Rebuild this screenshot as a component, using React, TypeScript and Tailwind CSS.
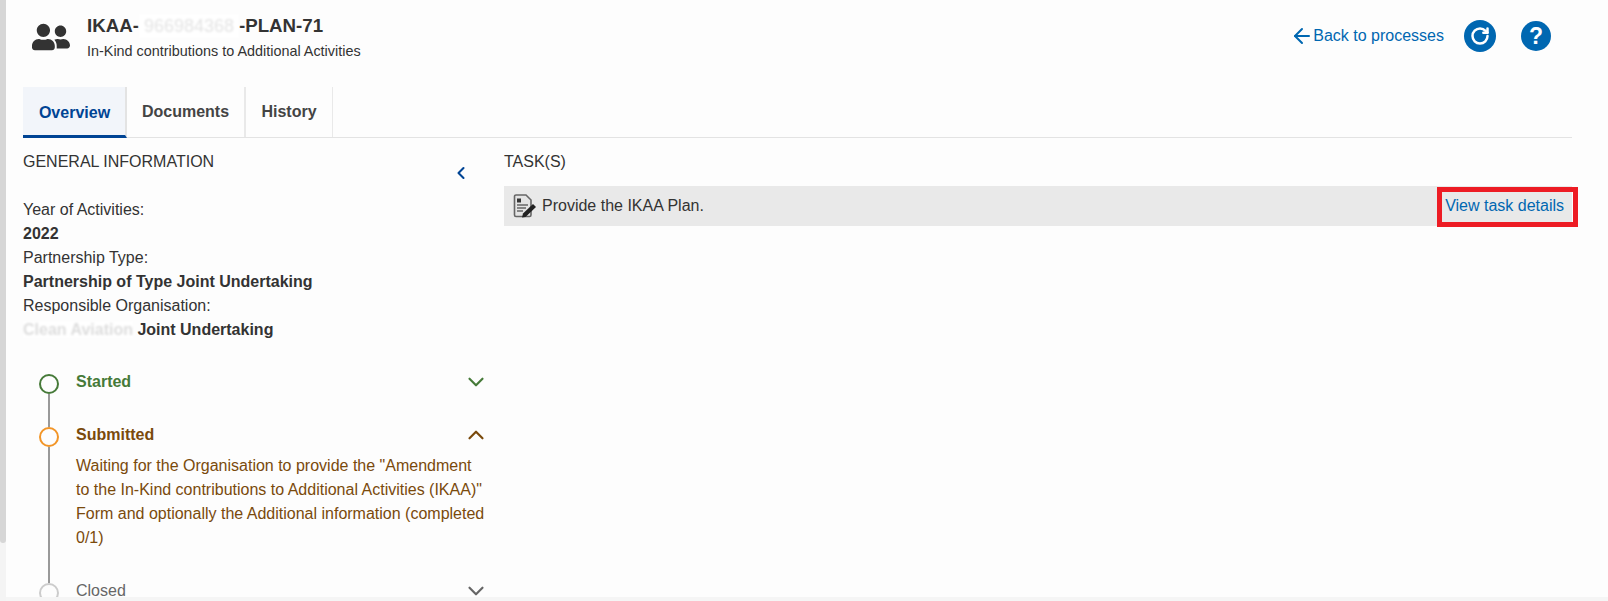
import React from 'react';
import { FaUserFriends } from 'react-icons/fa';
import { ArrowLeft, ChevronDown, ChevronLeft, ChevronUp, RotateCw } from 'lucide-react';

const TaskIcon = () => (
  <svg width="24" height="24" viewBox="0 0 24 24" fill="none">
    <path d="M1.500 2.500a1.500 1.500 0 0 1 1.500-1.500h10l5 5v15a1.500 1.500 0 0 1-1.500 1.500H3a1.500 1.500 0 0 1-1.500-1.500z" fill="#e4e4e4" stroke="#666" strokeWidth="1.600" />
    <rect x="4" y="4.500" width="4" height="4" fill="#333" />
    <path d="M4 11h11M4 14h9M4 17h6" stroke="#666" strokeWidth="1.300" />
    <path d="M9 23.500l1-4L20 10l3 3L12.500 23z" fill="#222" />
  </svg>
);

type StepProps = {
  label: string;
  labelClass: string;
  ringClass: string;
  open?: boolean;
  hasLine?: boolean;
  children?: React.ReactNode;
};

const Step = ({ label, labelClass, ringClass, open, hasLine = true, children }: StepProps) => (
  <div className="flex">
    <div className="w-[53px] pl-[16px] flex flex-col shrink-0">
      <div className={`w-[20px] h-[20px] rounded-full border-2 shrink-0 ${ringClass}`} />
      {hasLine && <div className="w-[2px] flex-1 bg-[#999999] ml-[9px]" />}
    </div>
    <div className="flex-1 min-w-0">
      <div className="flex items-center justify-between h-[20px] mt-[-2px]">
        <span className={`text-[16px] ${labelClass}`}>{label}</span>
        {open ? (
          <ChevronUp className={`w-[26px] h-[26px] mr-[-5px] ${labelClass}`} strokeWidth={2} />
        ) : (
          <ChevronDown className={`w-[26px] h-[26px] mr-[-5px] ${labelClass}`} strokeWidth={2} />
        )}
      </div>
      {children}
    </div>
  </div>
);

export default function App() {
  return (
    <div className="relative flex h-[601px] w-[1608px] overflow-hidden bg-[#fdfdfd] text-[#333333] font-['Liberation_Sans',Arial,sans-serif]">
      <div className="w-[6px] shrink-0 bg-[#f4f4f4]">
        <div className="h-[543px] bg-[#d6d6d6] rounded-b-[4px]" />
      </div>

      <div className="flex-1 min-w-0 pl-[17px] pr-[36px]">
        <header className="flex items-start justify-between h-[87px]">
          <div className="flex">
            <FaUserFriends className="w-[38px] h-[38px] ml-[9px] mt-[18px] text-[#333333]" />
            <div className="ml-[17px] mt-[14px]">
              <div className="flex items-center text-[18.700px] leading-[24px] font-bold text-[#333333]">
                IKAA-
                <span className="bg-white text-[#e4e4e4] font-normal blur-[1px] px-[5px] text-[18px]">966984368</span>
                -PLAN-71
              </div>
              <div className="text-[14.400px] leading-[20px] mt-[3px]">In-Kind contributions to Additional Activities</div>
            </div>
          </div>
          <div className="flex items-center mt-[20px] mr-[21px] text-[#0067b1]">
            <ArrowLeft className="w-[24px] h-[24px] mr-[-1px]" strokeWidth={2} />
            <span className="text-[16px]">Back to processes</span>
            <span className="ml-[20px] w-[32px] h-[32px] rounded-full bg-[#0067b1] flex items-center justify-center">
              <RotateCw className="w-[20px] h-[20px] text-white" strokeWidth={3} />
            </span>
            <span className="ml-[25px] w-[30px] h-[30px] rounded-full bg-[#0067b1] flex items-center justify-center text-white text-[23px] font-bold">?</span>
          </div>
        </header>

        <nav className="flex h-[51px] border-b border-[#e3e3e3]">
          <div className="w-[104px] h-[51px] pt-[3px] pl-[1px] bg-[#f2f5fa] border-b-[3px] border-r-2 border-b-[#004494] border-r-[#e3e3e3] flex items-center justify-center text-[16px] font-bold text-[#004494]">
            Overview
          </div>
          <div className="w-[119px] border-r-2 border-[#e9e9e9] flex items-center justify-center text-[16px] font-bold text-[#444444]">
            Documents
          </div>
          <div className="w-[87px] border-r border-[#e9e9e9] flex items-center justify-center text-[16px] font-bold text-[#444444]">
            History
          </div>
        </nav>

        <div className="flex">
          <aside className="w-[461px] shrink-0">
            <div className="flex justify-between pt-[12px]">
              <h2 className="text-[16px] leading-[24px]">GENERAL INFORMATION</h2>
              <ChevronLeft className="w-[20px] h-[20px] mt-[13px] mr-[13px] text-[#004494]" strokeWidth={2.500} />
            </div>
            <dl className="mt-[15px] text-[16px] leading-[24px]">
              <dt>Year of Activities:</dt>
              <dd className="font-bold">2022</dd>
              <dt>Partnership Type:</dt>
              <dd className="font-bold">Partnership of Type Joint Undertaking</dd>
              <dt>Responsible Organisation:</dt>
              <dd className="font-bold">
                <span className="bg-white text-[#dddddd] blur-[1px]">Clean Aviation</span> Joint Undertaking
              </dd>
            </dl>
            <div className="mt-[32px]">
              <Step label="Started" labelClass="font-bold text-[#467a39]" ringClass="border-[#467a39]">
                <div className="h-[35px]" />
              </Step>
              <Step label="Submitted" labelClass="font-bold text-[#7a4a0c]" ringClass="border-[#f29527]" open>
                <p className="text-[16px] leading-[24px] text-[#7a4a0c] mt-[9px] pb-[33px] mr-[-5px]">
                  Waiting for the Organisation to provide the "Amendment to the In-Kind contributions to Additional Activities (IKAA)" Form and optionally the Additional information (completed 0/1)
                </p>
              </Step>
              <Step label="Closed" labelClass="text-[#666666]" ringClass="border-[#cccccc]" hasLine={false} />
            </div>
          </aside>

          <section className="flex-1 min-w-0 ml-[20px]">
            <h2 className="pt-[12px] text-[16px] leading-[24px]">TASK(S)</h2>
            <div className="mt-[12px] h-[40px] bg-[#e9e9e9] flex items-center justify-between pl-[9px] pr-[8px]">
              <div className="flex items-center">
                <TaskIcon />
                <span className="ml-[5px] text-[16px]">Provide the IKAA Plan.</span>
              </div>
              <a className="text-[16px] text-[#0067b1]">View task details</a>
            </div>
          </section>
        </div>
      </div>

      <div className="absolute left-[1437px] top-[187px] w-[141px] h-[40px] border-[5px] border-[#ed1c24]" />
      <div className="absolute left-[6px] bottom-0 w-full h-[4px] bg-[#f5f5f5]" />
    </div>
  );
}
